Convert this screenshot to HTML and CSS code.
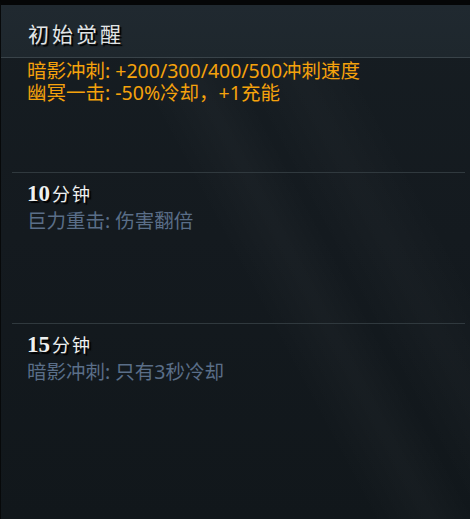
FILE: index.html
```html
<!DOCTYPE html>
<html lang="zh-CN">
<head>
<meta charset="utf-8">
<title>初始觉醒</title>
<link rel="stylesheet" href="styles.css">
</head>
<body>
    <div class="panel">
        <div class="panelHead">
            <h1 class="headTitle">初始觉醒</h1>
        </div>
        <div class="tier tierFirst">
            <p class="bonus bonusActive">暗影冲刺: +200/300/400/500冲刺速度</p>
            <p class="bonus bonusActive">幽冥一击: -50%冷却，+1充能</p>
        </div>
        <div class="tier tierSecond">
            <div class="tierTime"><span class="timeNum">10</span><span class="timeUnit">分钟</span></div>
            <p class="bonus bonusLocked">巨力重击: 伤害翻倍</p>
        </div>
        <div class="tier">
            <div class="tierTime"><span class="timeNum">15</span><span class="timeUnit">分钟</span></div>
            <p class="bonus bonusLocked">暗影冲刺: 只有3秒冷却</p>
        </div>
    </div>
</body>
</html>
```

FILE: styles.css
```css
html, body {
    margin: 0;
    padding: 0;
    background-color: #000;
}

.panel {
    position: relative;
    width: 469px;
    height: 514px;
    border-top: 5px solid #050607;
    border-left: 1px solid #07090a;
    overflow: hidden;
    font-family: "Noto Sans", "Noto Sans CJK SC", sans-serif;
    background-color: #12181c;
    background-image:
        linear-gradient(62deg, rgba(255,255,255,0) 50%, rgba(255,255,255,0.022) 58%, rgba(255,255,255,0) 64%, rgba(255,255,255,0.018) 72%, rgba(255,255,255,0) 80%),
        linear-gradient(180deg, #161d22 0%, #141a1f 45%, #11171b 100%);
}

/* little grey notch on the left edge */
.panel::before {
    content: "";
    position: absolute;
    left: -1px;
    top: 249px;
    width: 1px;
    height: 26px;
    background-color: #2b3338;
}

.panelHead {
    height: 52px;
    padding-left: 27px;
    background: linear-gradient(180deg, #202930 0%, #1e272d 100%);
    border-bottom: 1px solid #394349;
    display: flex;
    align-items: center;
}

.headTitle {
    margin: 4px 0 0 0;
    font-family: "Noto Sans CJK SC", serif;
    font-weight: normal;
    font-size: 21px;
    letter-spacing: 3px;
    color: #e2e5e6;
    text-shadow: 2px 2px 1px #000;
}

.tier {
    margin: 0 5px 0 11px;
    padding: 6px 0 0 15px;
}

.tierFirst {
    height: 115px;
    padding-top: 2px;
    box-sizing: border-box;
    border-bottom: 1px solid #30393e;
}

.tierSecond {
    height: 151px;
    box-sizing: border-box;
    border-bottom: 1px solid #30393e;
}

.bonus {
    margin: 0;
    font-size: 19.5px;
}

.bonusActive {
    line-height: 22px;
    color: #f5a20c;
}

.bonusLocked {
    line-height: 28px;
    color: #5a6e88;
}

.tierTime {
    height: 28px;
    line-height: 28px;
    color: #eef0f0;
    text-shadow: 2px 2px 1px #000;
}

.timeNum {
    font-family: "Liberation Serif", serif;
    font-weight: bold;
    font-size: 23px;
}

.timeUnit {
    font-family: "Noto Sans CJK SC", sans-serif;
    font-size: 18px;
    letter-spacing: 2px;
    margin-left: 2px;
}
```
